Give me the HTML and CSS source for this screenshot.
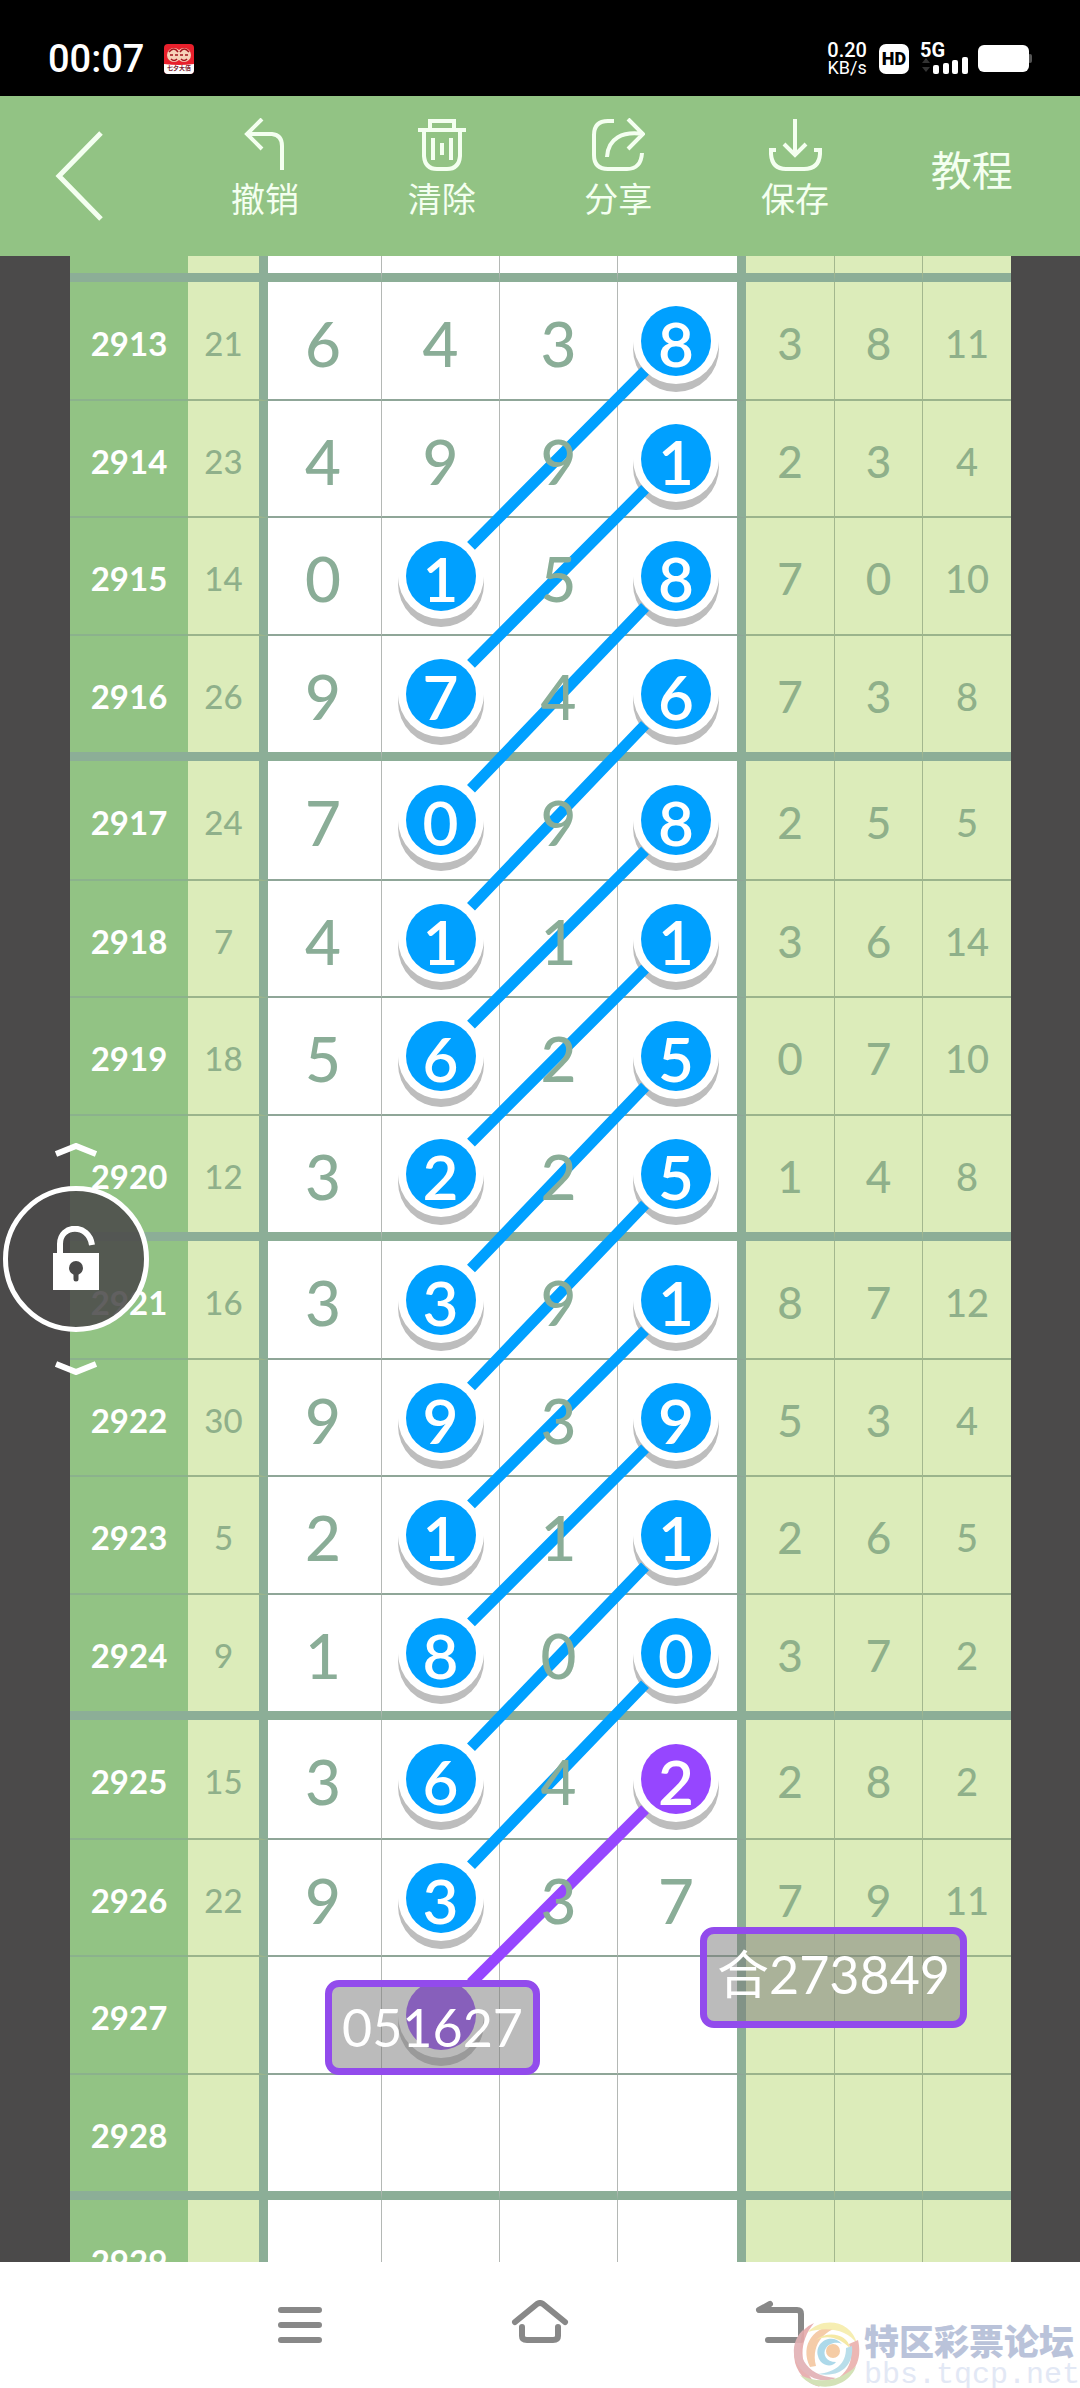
FILE: index.html
```html
<!DOCTYPE html>
<html lang="zh-CN">
<head>
    <meta charset="UTF-8">
    <meta name="viewport" content="width=device-width, initial-scale=1.0">
    <title>走势图</title>
    <link rel="stylesheet" href="styles.css">
</head>
<body>
    <div class="status">
        <span class="time">00:07</span>
        <svg class="app-icon" viewBox="0 0 30 30" width="30" height="30">
            <rect width="30" height="30" rx="4" fill="#e8202c"/>
            <path d="M0 20 Q15 22 30 20 V26 Q30 30 26 30 H4 Q0 30 0 26Z" fill="#fff"/>
            <circle cx="10" cy="11" r="7" fill="#f6d2b8"/>
            <circle cx="20" cy="11" r="7" fill="#f6d2b8"/>
            <path d="M5 8 Q10 2 14 8 M16 8 Q20 2 25 8 M6 11h3 M11 11h3 M16 11h3 M21 11h3 M7 15q3 3 6 0 M17 15q3 3 6 0" stroke="#a3131d" stroke-width="1.5" fill="none"/>
            <text x="15" y="26" class="app-text">七夕大佰</text>
        </svg>
        <span class="speed"><span class="rate">0.20</span><span class="unit">KB/s</span></span>
        <span class="hd">HD</span>
        <span class="network">
            <span class="network-type">5G</span>
            <svg viewBox="0 0 50 18" width="50" height="18">
                <path d="M2 6 l4 -5 l4 5z M2 10 l4 5 l4 -5z" fill="#333"/>
                <rect x="13" y="8" width="6" height="9" rx="2" fill="#fff"/>
                <rect x="23" y="6" width="6" height="11" rx="2" fill="#fff"/>
                <rect x="32" y="3" width="6" height="14" rx="2" fill="#fff"/>
                <rect x="42" y="0" width="6" height="17" rx="2" fill="#fff"/>
            </svg>
        </span>
        <svg class="battery" viewBox="0 0 54 28" width="54" height="28">
            <rect x="50" y="9" width="4" height="9" rx="2" fill="#555"/>
            <rect width="51" height="27" rx="6" fill="#fff"/>
        </svg>
    </div>

    <header class="toolbar">
        <button class="tool" type="button" aria-label="返回">
            <svg class="back-icon" viewBox="0 0 50 92" width="50" height="92"><path d="M46 3 L4 46 L46 89" stroke-width="5"/></svg>
        </button>
        <button class="tool" type="button">
            <svg viewBox="0 0 54 54" width="54" height="54"><path d="M24 1 L9 16 L24 31 M9 16 H34 Q44 17 44 28 V52"/></svg>
            撤销
        </button>
        <button class="tool" type="button">
            <svg viewBox="0 0 54 54" width="54" height="54"><path d="M15 12 V3 H39 V12 M3 12 H51 M9 12 V38 Q10 51 22 51 H32 Q44 51 45 38 V12 M18 20 V42 M27 25 V37 M36 20 V42"/></svg>
            清除
        </button>
        <button class="tool" type="button">
            <svg viewBox="0 0 54 54" width="54" height="54"><path d="M23 3 H17 Q3 3 3 17 V37 Q3 51 17 51 H36 Q50 51 51 35 M37 1 L52 16 L37 31 M52 16 C32 13 17 20 16 39"/></svg>
            分享
        </button>
        <button class="tool" type="button">
            <svg viewBox="0 0 54 54" width="54" height="54"><path d="M27 1 V36 M16 26 L27 37 L38 26 M8 32 H3 V36 Q4 51 18 51 H36 Q51 51 52 36 V32 H46"/></svg>
            保存
        </button>
        <button class="tool tutorial" type="button">教程</button>
    </header>

    <main class="stage">
        <div class="sheet">
            <table class="chart">
                <colgroup>
                    <col class="c-year"><col class="c-sum"><col class="c-first"><col class="c-num"><col class="c-num"><col class="c-last"><col class="c-tail"><col class="c-side"><col class="c-side">
                </colgroup>
                <tbody class="stub">
                    <tr><th></th><td></td><td></td><td></td><td></td><td></td><td></td><td></td><td></td></tr>
                </tbody>
                <tbody>
                    <tr><th>2913</th><td>21</td><td><span>6</span></td><td><span>4</span></td><td><span>3</span></td><td><b class="ball">8</b></td><td>3</td><td>8</td><td>11</td></tr>
                    <tr><th>2914</th><td>23</td><td><span>4</span></td><td><span>9</span></td><td><span>9</span></td><td><b class="ball">1</b></td><td>2</td><td>3</td><td>4</td></tr>
                    <tr><th>2915</th><td>14</td><td><span>0</span></td><td><b class="ball">1</b></td><td><span>5</span></td><td><b class="ball">8</b></td><td>7</td><td>0</td><td>10</td></tr>
                    <tr><th>2916</th><td>26</td><td><span>9</span></td><td><b class="ball">7</b></td><td><span>4</span></td><td><b class="ball">6</b></td><td>7</td><td>3</td><td>8</td></tr>
                </tbody>
                <tbody>
                    <tr><th>2917</th><td>24</td><td><span>7</span></td><td><b class="ball">0</b></td><td><span>9</span></td><td><b class="ball">8</b></td><td>2</td><td>5</td><td>5</td></tr>
                    <tr><th>2918</th><td>7</td><td><span>4</span></td><td><b class="ball">1</b></td><td><span>1</span></td><td><b class="ball">1</b></td><td>3</td><td>6</td><td>14</td></tr>
                    <tr><th>2919</th><td>18</td><td><span>5</span></td><td><b class="ball">6</b></td><td><span>2</span></td><td><b class="ball">5</b></td><td>0</td><td>7</td><td>10</td></tr>
                    <tr><th>2920</th><td>12</td><td><span>3</span></td><td><b class="ball">2</b></td><td><span>2</span></td><td><b class="ball">5</b></td><td>1</td><td>4</td><td>8</td></tr>
                </tbody>
                <tbody>
                    <tr><th>2921</th><td>16</td><td><span>3</span></td><td><b class="ball">3</b></td><td><span>9</span></td><td><b class="ball">1</b></td><td>8</td><td>7</td><td>12</td></tr>
                    <tr><th>2922</th><td>30</td><td><span>9</span></td><td><b class="ball">9</b></td><td><span>3</span></td><td><b class="ball">9</b></td><td>5</td><td>3</td><td>4</td></tr>
                    <tr><th>2923</th><td>5</td><td><span>2</span></td><td><b class="ball">1</b></td><td><span>1</span></td><td><b class="ball">1</b></td><td>2</td><td>6</td><td>5</td></tr>
                    <tr><th>2924</th><td>9</td><td><span>1</span></td><td><b class="ball">8</b></td><td><span>0</span></td><td><b class="ball">0</b></td><td>3</td><td>7</td><td>2</td></tr>
                </tbody>
                <tbody>
                    <tr><th>2925</th><td>15</td><td><span>3</span></td><td><b class="ball">6</b></td><td><span>4</span></td><td><b class="ball purple">2</b></td><td>2</td><td>8</td><td>2</td></tr>
                    <tr><th>2926</th><td>22</td><td><span>9</span></td><td><b class="ball">3</b></td><td><span>3</span></td><td><span>7</span></td><td>7</td><td>9</td><td>11</td></tr>
                    <tr><th>2927</th><td></td><td></td><td><b class="ball purple"></b></td><td></td><td></td><td></td><td></td><td></td></tr>
                    <tr><th>2928</th><td></td><td></td><td></td><td></td><td></td><td></td><td></td><td></td></tr>
                </tbody>
                <tbody>
                    <tr><th>2929</th><td></td><td></td><td></td><td></td><td></td><td></td><td></td><td></td></tr>
                </tbody>
            </table>

            <!-- each line runs from the last column to the second one, two rows down -->
            <svg class="lines" viewBox="0 0 941 2064" preserveAspectRatio="none">
                <path d="M575 115 L401 290 M575 233 L401 408 M575 351 L401 533 M575 469 L401 651 M575 595 L401 769 M575 713 L401 887 M575 831 L401 1013 M575 949 L401 1131 M575 1075 L401 1249 M575 1193 L401 1367 M575 1311 L401 1492 M575 1429 L401 1610"/>
                <path class="purple-line" d="M575 1554 L401 1728"/>
            </svg>

            <div class="note note-left">051627</div>
            <div class="note note-right">合273849</div>
        </div>

        <div class="lock">
            <svg viewBox="0 0 44 14" width="44" height="14"><path d="M2 11 L22 3 L42 11" fill="none" stroke="#fff" stroke-width="6"/></svg>
            <button class="lock-button" type="button" aria-label="解锁">
                <svg viewBox="0 0 48 64" width="48" height="64">
                    <path d="M8 30 V18 C8 -2 37 -3 40 19" fill="none" stroke="#fff" stroke-width="6"/>
                    <rect x="1" y="27" width="46" height="37" fill="#fff"/>
                    <circle cx="24" cy="42" r="7" fill="#4a4a4a"/>
                    <path d="M24 43 V53" stroke="#4a4a4a" stroke-width="5" stroke-linecap="round"/>
                </svg>
            </button>
            <svg viewBox="0 0 44 14" width="44" height="14"><path d="M2 3 L22 11 L42 3" fill="none" stroke="#fff" stroke-width="6"/></svg>
        </div>
    </main>

    <nav class="navbar">
        <button type="button" aria-label="菜单">
            <svg viewBox="0 0 60 48" width="60" height="48"><path d="M11 10 H49 M11 25 H49 M11 40 H49"/></svg>
        </button>
        <button type="button" aria-label="主页">
            <svg viewBox="0 0 60 48" width="60" height="48"><path d="M5 22 L27 4 Q30 2 33 4 L55 22 M12 27 V36 Q12 40 17 40 H43 Q48 40 48 36 V27"/></svg>
        </button>
        <button type="button" aria-label="后退">
            <svg viewBox="0 0 60 48" width="60" height="48"><path d="M20 4 L9 10 H47 Q51 10 51 14 V40 H18"/></svg>
        </button>
    </nav>

    <div class="watermark">
        <svg viewBox="0 0 68 68" width="68" height="68">
            <path d="M22 3 A34 34 0 0 0 28 67 C8 52 4 25 22 3Z" fill="#e6a9aa"/>
            <path d="M12 9 C2 32 12 56 44 58 C26 66 4 52 2 34 C1 24 5 15 12 9Z" fill="#e2b0b4"/>
            <path d="M18 47 C6 22 26 2 52 6 C36 8 18 22 24 46Z" fill="#f4c7a0"/>
            <path d="M16 12 C30 -4 60 0 65 24 C56 10 36 6 16 12Z" fill="#f6edaa"/>
            <path d="M24 20 C36 10 56 14 58 28 C48 18 36 14 24 20Z" fill="#f5e79c"/>
            <path d="M66 20 C72 46 56 58 44 60 C58 50 62 38 57 24Z" fill="#eab0ac"/>
            <path d="M60 26 C62 44 50 58 26 54 C44 52 54 44 54 28Z" fill="#b2dbe8"/>
            <path d="M8 55 C26 64 48 62 64 46 C58 66 26 76 8 55Z" fill="#cfdfb0"/>
            <path d="M50 24 C40 12 22 22 26 36 C28 46 40 48 44 42 C34 42 30 34 34 28 C38 22 46 22 50 24Z" fill="#a5d5e8"/>
            <circle cx="41" cy="31" r="7" fill="#f4c79c"/>
        </svg>
        <div class="site">
            <div class="site-name">特区彩票论坛</div>
            <div class="site-url">bbs.tqcp.net</div>
        </div>
    </div>
</body>
</html>
```
FILE: styles.css
```css
* {
    box-sizing: border-box;
}

body {
    margin: 0;
    height: 100vh;
    display: flex;
    flex-direction: column;
    overflow: hidden;
    position: relative;
    background: #fff;
    font-family: Lato, "Noto Sans CJK SC", sans-serif;
}

button {
    padding: 0;
    border: none;
    background: none;
    font-family: inherit;
    cursor: pointer;
}

/* status bar */
.status {
    height: 96px;
    flex: none;
    display: flex;
    align-items: center;
    padding: 22px 48px 0 48px;
    background: #000;
    color: #fff;
    font-family: Roboto, sans-serif;
}

.time {
    font-size: 38px;
    font-weight: 500;
}

.app-icon {
    margin-left: 20px;
}

.app-text {
    font-family: "Noto Sans CJK SC", sans-serif;
    font-size: 6px;
    font-weight: bold;
    text-anchor: middle;
    fill: #7c1c2c;
}

.speed {
    margin-left: auto;
    display: flex;
    flex-direction: column;
    align-items: center;
    line-height: 18px;
}

.rate {
    font-size: 20px;
    font-weight: 500;
}

.unit {
    font-size: 18px;
}

.hd {
    width: 30px;
    height: 30px;
    margin: 0 11px 0 12px;
    border-radius: 7px;
    background: #fff;
    color: #000;
    font-size: 18px;
    font-weight: 900;
    line-height: 30px;
    text-align: center;
}

.network {
    display: flex;
    flex-direction: column;
    line-height: 14px;
}

.network-type {
    font-size: 20px;
    font-weight: bold;
}

.battery {
    margin-left: 8px;
}

/* toolbar */
.toolbar {
    height: 160px;
    flex: none;
    display: grid;
    grid-template-columns: repeat(6, 1fr);
    padding-right: 20px;
    background: #92c384;
}

.tool {
    display: flex;
    flex-direction: column;
    align-items: center;
    padding-top: 22px;
    color: #f4fff0;
    font-size: 34px;
    line-height: 54px;
}

.tool svg {
    fill: none;
    stroke: #f4fff0;
    stroke-width: 4;
}

.tool .back-icon {
    margin: 12px 16px 0 0;
}

.tutorial {
    padding-top: 48px;
    font-size: 41px;
}

/* chart */
.stage {
    flex: 1;
    min-height: 0;
    position: relative;
    overflow: hidden;
    padding: 0 69px 0 70px;
    background: #4b4a4a;
}

.sheet {
    position: relative;
}

.chart {
    width: 100%;
    table-layout: fixed;
    border-collapse: separate;
    border-spacing: 0;
    color: #8aad97;
}

.c-year { width: 118px; }
.c-sum { width: 80px; }
.c-first { width: 114px; }
.c-num { width: 118px; }
.c-last { width: 128px; }
.c-tail { width: 89px; }
.c-side { width: 88px; }

th, td {
    height: 118px;
    padding: 4px 0 0;
    text-align: center;
    vertical-align: middle;
    border-right: 1px solid #b4b8b5;
    border-bottom: 2px solid #8fa698;
    background: #fff;
    font-size: 62px;
    font-weight: 700;
    line-height: 70px;
}

th {
    border-right: none;
    border-bottom-color: #8bb28c;
    background: #92c384;
    color: #fff;
    font-size: 33px;
}

td:nth-child(2) {
    border-right: 9px solid #8cae97;
    background: #dcecba;
    font-size: 33px;
}

td:nth-child(3), td:nth-child(6) {
    padding-right: 3px;
}

td:nth-child(6) {
    border-right: 9px solid #8cae97;
}

td:nth-child(n+7) {
    border-right-color: #a3b78e;
    background: #dcecba;
    font-size: 44px;
}

td:nth-child(9) {
    border-right: none;
    font-size: 38px;
}

td:nth-child(2), td:nth-child(n+7) {
    color: #8fb08a;
    border-bottom-color: #9bb48c;
    font-weight: 500;
}

tr:first-child > * { height: 120px; }
tbody:nth-child(odd) tr:first-child > * { height: 119px; }
tr:nth-child(2) > * { height: 117px; }
tbody tr:nth-child(4) > :nth-child(n) { height: 125px; border-bottom: 9px solid #8cae97; }
tbody.stub tr:first-child > :nth-child(n) { height: 26px; border-bottom: 9px solid #8cae97; }

td span {
    position: relative;
    z-index: 2;
    font-weight: 500;
}

.ball {
    display: block;
    width: 70px;
    height: 70px;
    margin: -4px auto 0;
    border-radius: 50%;
    background: #00a0ff;
    box-shadow: 0 0 0 8px #fff, 0 8px 0 8px #bdbdbd;
    color: #fff;
    font-weight: 600;
    line-height: 74px;
}

.purple {
    background: #9646ff;
}

.lines {
    position: absolute;
    left: 0;
    top: 0;
    width: 100%;
    height: 100%;
    z-index: 1;
    fill: none;
    stroke: #00a0ff;
    stroke-width: 11;
}

.purple-line {
    stroke: #9646ff;
}

.note {
    position: absolute;
    z-index: 3;
    padding: 0 10px;
    border: 7px solid #924bec;
    border-radius: 14px;
    background: rgba(120, 120, 120, 0.5);
    color: #fff;
    font-size: 52px;
    line-height: 81px;
}

.note-left {
    left: 255px;
    top: 1724px;
}

.note-right {
    left: 630px;
    top: 1671px;
    padding-bottom: 6px;
}

/* floating lock */
.lock {
    position: absolute;
    left: 3px;
    top: 887px;
    z-index: 4;
    display: flex;
    flex-direction: column;
    align-items: center;
    gap: 29px;
}

.lock-button {
    width: 146px;
    height: 146px;
    border: 5px solid #fff;
    border-radius: 50%;
    background: rgba(75, 74, 74, 0.88);
}

/* bottom navigation */
.navbar {
    height: 126px;
    flex: none;
    display: grid;
    grid-template-columns: repeat(3, 240px);
    justify-content: center;
    align-items: center;
    background: #fff;
}

.navbar svg {
    fill: none;
    stroke: #888;
    stroke-width: 6;
    stroke-linecap: round;
    stroke-linejoin: round;
}

.watermark {
    position: absolute;
    right: 0;
    bottom: 0;
    display: flex;
    align-items: center;
    gap: 4px;
    opacity: 0.9;
}

.site-name {
    color: #b3bdd6;
    font-size: 35px;
    font-weight: 900;
    line-height: 42px;
}

.site-url {
    color: #dfe6f5;
    font-family: "Liberation Mono", monospace;
    font-size: 30px;
    line-height: 26px;
}
```
